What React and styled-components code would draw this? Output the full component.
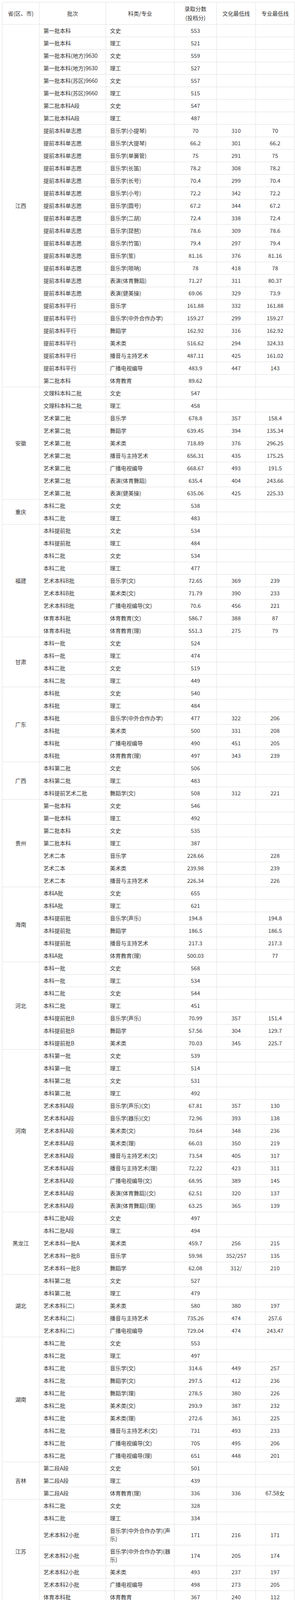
import React from 'react';
import styled, { createGlobalStyle } from 'styled-components';

const GlobalStyle = createGlobalStyle`
  body {
    margin: 0;
    background: #fff;
    font-family: "Noto Sans CJK SC", "Noto Sans", sans-serif;
    color: #333;
  }
`;

// 各省录取数据: [批次, 科类/专业, 录取分数, 文化最低线, 专业最低线]
const groups = [
  {
    province: '江西',
    rows: [
      ['第一批本科', '文史', '553'],
      ['第一批本科', '理工', '521'],
      ['第一批本科(地方)9630', '文史', '559'],
      ['第一批本科(地方)9630', '理工', '527'],
      ['第一批本科(苏区)9660', '文史', '557'],
      ['第一批本科(苏区)9660', '理工', '515'],
      ['第二批本科A段', '文史', '547'],
      ['第二批本科A段', '理工', '487'],
      ['提前本科单志愿', '音乐学(小提琴)', '70', '310', '70'],
      ['提前本科单志愿', '音乐学(大提琴)', '66.2', '301', '66.2'],
      ['提前本科单志愿', '音乐学(单簧管)', '75', '291', '75'],
      ['提前本科单志愿', '音乐学(长笛)', '78.2', '308', '78.2'],
      ['提前本科单志愿', '音乐学(长号)', '70.4', '299', '70.4'],
      ['提前本科单志愿', '音乐学(小号)', '72.2', '342', '72.2'],
      ['提前本科单志愿', '音乐学(圆号)', '67.2', '344', '67.2'],
      ['提前本科单志愿', '音乐学(二胡)', '72.4', '338', '72.4'],
      ['提前本科单志愿', '音乐学(琵琶)', '78.6', '309', '78.6'],
      ['提前本科单志愿', '音乐学(竹笛)', '79.4', '297', '79.4'],
      ['提前本科单志愿', '音乐学(笙)', '81.16', '376', '81.16'],
      ['提前本科单志愿', '音乐学(唢呐)', '78', '418', '78'],
      ['提前本科单志愿', '表演(体育舞蹈)', '71.27', '311', '80.37'],
      ['提前本科单志愿', '表演(健美操)', '69.06', '329', '73.9'],
      ['提前本科平行', '音乐学', '161.88', '332', '161.88'],
      ['提前本科平行', '音乐学(中外合作办学)', '159.27', '299', '159.27'],
      ['提前本科平行', '舞蹈学', '162.92', '316', '162.92'],
      ['提前本科平行', '美术类', '516.62', '294', '324.33'],
      ['提前本科平行', '播音与主持艺术', '487.11', '425', '161.02'],
      ['提前本科平行', '广播电视编导', '483.9', '447', '143'],
      ['第二批本科', '体育教育', '89.62'],
    ],
  },
  {
    province: '安徽',
    rows: [
      ['文理科本科二批', '文史', '547'],
      ['文理科本科二批', '理工', '458'],
      ['艺术第二批', '音乐学', '678.8', '357', '158.4'],
      ['艺术第二批', '舞蹈学', '639.45', '394', '135.34'],
      ['艺术第二批', '美术类', '718.89', '376', '296.25'],
      ['艺术第二批', '播音与主持艺术', '656.31', '435', '175.25'],
      ['艺术第二批', '广播电视编导', '668.67', '493', '191.5'],
      ['艺术第二批', '表演(体育舞蹈)', '635.4', '404', '243.66'],
      ['艺术第二批', '表演(健美操)', '635.06', '425', '225.33'],
    ],
  },
  {
    province: '重庆',
    rows: [
      ['本科二批', '文史', '538'],
      ['本科二批', '理工', '483'],
    ],
  },
  {
    province: '福建',
    rows: [
      ['本科提前批', '文史', '534'],
      ['本科提前批', '理工', '484'],
      ['本科二批', '文史', '534'],
      ['本科二批', '理工', '477'],
      ['艺术本科B批', '音乐学(文)', '72.65', '369', '239'],
      ['艺术本科B批', '美术类(文)', '71.79', '390', '233'],
      ['艺术本科B批', '广播电视编导(文)', '70.6', '456', '221'],
      ['体育本科批', '体育教育(文)', '586.7', '388', '87'],
      ['体育本科批', '体育教育(理)', '551.3', '275', '79'],
    ],
  },
  {
    province: '甘肃',
    rows: [
      ['本科一批', '文史', '524'],
      ['本科一批', '理工', '474'],
      ['本科二批', '文史', '519'],
      ['本科二批', '理工', '449'],
    ],
  },
  {
    province: '广东',
    rows: [
      ['本科批', '文史', '540'],
      ['本科批', '理工', '484'],
      ['本科批', '音乐学(中外合作办学)', '477', '322', '206'],
      ['本科批', '美术类', '500', '331', '208'],
      ['本科批', '广播电视编导', '490', '451', '205'],
      ['本科批', '体育教育(理)', '497', '343', '239'],
    ],
  },
  {
    province: '广西',
    rows: [
      ['本科第二批', '文史', '506'],
      ['本科第二批', '理工', '483'],
      ['本科提前艺术二批', '舞蹈学(文)', '508', '312', '221'],
    ],
  },
  {
    province: '贵州',
    rows: [
      ['第一批本科', '文史', '546'],
      ['第一批本科', '理工', '492'],
      ['第二批本科', '文史', '535'],
      ['第二批本科', '理工', '387'],
      ['艺术二本', '音乐学', '228.66', '', '228'],
      ['艺术二本', '美术类', '239.98', '', '239'],
      ['艺术二本', '播音与主持艺术', '226.34', '', '226'],
    ],
  },
  {
    province: '海南',
    rows: [
      ['本科A批', '文史', '655'],
      ['本科A批', '理工', '621'],
      ['本科提前批', '音乐学(声乐)', '194.8', '', '194.8'],
      ['本科提前批', '舞蹈学', '186.5', '', '186.5'],
      ['本科提前批', '播音与主持艺术', '217.3', '', '217.3'],
      ['本科A批', '体育教育(理)', '500.03', '', '77'],
    ],
  },
  {
    province: '河北',
    rows: [
      ['本科一批', '文史', '568'],
      ['本科一批', '理工', '534'],
      ['本科二批', '文史', '544'],
      ['本科二批', '理工', '451'],
      ['本科提前批B', '音乐学(声乐)', '70.99', '357', '151.4'],
      ['本科提前批B', '舞蹈学', '57.56', '304', '129.7'],
      ['本科提前批B', '美术类', '70.03', '345', '225.7'],
    ],
  },
  {
    province: '河南',
    rows: [
      ['本科第一批', '文史', '539'],
      ['本科第一批', '理工', '514'],
      ['本科第二批', '文史', '531'],
      ['本科第二批', '理工', '492'],
      ['艺术本科A段', '音乐学(声乐)(文)', '67.81', '357', '130'],
      ['艺术本科A段', '音乐学(器乐)(文)', '72.96', '393', '138'],
      ['艺术本科A段', '美术类(文)', '70.64', '348', '236'],
      ['艺术本科A段', '美术类(理)', '66.03', '350', '219'],
      ['艺术本科A段', '播音与主持艺术(文)', '73.54', '405', '317'],
      ['艺术本科A段', '播音与主持艺术(理)', '72.22', '423', '311'],
      ['艺术本科A段', '广播电视编导(文)', '68.95', '389', '145'],
      ['艺术本科A段', '表演(体育舞蹈)(文)', '62.51', '320', '137'],
      ['艺术本科A段', '表演(体育舞蹈)(理)', '63.25', '365', '139'],
    ],
  },
  {
    province: '黑龙江',
    rows: [
      ['本科二批A段', '文史', '497'],
      ['本科二批A段', '理工', '494'],
      ['艺术本科一批A', '美术类', '459.7', '256', '215'],
      ['艺术本科一批B', '音乐学', '59.98', '352/257', '135'],
      ['艺术本科一批B', '舞蹈学', '62.08', '312/', '210'],
    ],
  },
  {
    province: '湖北',
    rows: [
      ['本科第二批', '文史', '527'],
      ['本科第二批', '理工', '479'],
      ['艺术本科(二)', '美术类', '580', '380', '197'],
      ['艺术本科(二)', '播音与主持艺术', '735.26', '474', '257.6'],
      ['艺术本科(二)', '广播电视编导', '729.04', '474', '243.47'],
    ],
  },
  {
    province: '湖南',
    rows: [
      ['本科二批', '文史', '553'],
      ['本科二批', '理工', '497'],
      ['本科二批', '音乐学(文)', '314.6', '449', '257'],
      ['本科二批', '舞蹈学(文)', '297.5', '412', '236'],
      ['本科二批', '舞蹈学(理)', '278.5', '380', '226'],
      ['本科二批', '美术类(文)', '293.9', '387', '232'],
      ['本科二批', '美术类(理)', '272.6', '361', '225'],
      ['本科二批', '播音与主持艺术(文)', '731', '493', '233'],
      ['本科二批', '广播电视编导(文)', '705', '495', '206'],
      ['本科二批', '广播电视编导(理)', '651', '448', '201'],
    ],
  },
  {
    province: '吉林',
    rows: [
      ['第二段A段', '文史', '501'],
      ['第二段A段', '理工', '439'],
      ['第二段A段', '体育教育(理)', '336', '336', '67.58女'],
    ],
  },
  {
    province: '江苏',
    rows: [
      ['本科二批', '文史', '328'],
      ['本科二批', '理工', '334'],
      ['艺术本科2小批', '音乐学(中外合作办学)(声乐)', '171', '216', '171'],
      ['艺术本科2小批', '音乐学(中外合作办学)(器乐)', '174', '205', '174'],
      ['艺术本科2小批', '美术类', '493', '237', '197'],
      ['艺术本科2小批', '广播电视编导', '498', '273', '205'],
      ['体育本科批', '体育教育', '367', '240', '112'],
    ],
  },
  {
    province: '辽宁',
    rows: [
      ['本科批', '文史', '545'],
      ['本科批', '理工', '513'],
      ['体育本科二批', '体育教育(文)', '131.4', '412', '71.9'],
      ['体育本科二批', '体育教育(理)', '118.2', '321', '71'],
    ],
  },
  {
    province: '内蒙古',
    rows: [
      ['本科二批', '文史', '488'],
      ['本科二批', '理工', '419'],
    ],
  },
  {
    province: '山东',
    rows: [
      ['本科普通批', '文史', '541'],
      ['本科普通批', '理工', '501'],
      ['艺术本科A段联考', '音乐学(文)', '73.11', '331', '73.11'],
      ['艺术本科A段联考', '音乐学(理)', '72.88', '301', '72.88'],
      ['艺术本科A段联考', '舞蹈学(文)', '423', '423', ''],
      ['艺术本科A段', '美术类(文)', '547.46', '355', '226.33'],
      ['艺术本科A段', '美术类(理)', '542.35', '288', '246.67'],
      ['艺术本科A段', '广播电视编导(文)', '513.5', '485', '201.5'],
      ['艺术本科A段', '广播电视编导(理)', '489.75', '465', '219'],
      ['本科普通批', '体育教育', '554.45', '403', '81.05'],
    ],
  },
  {
    province: '山西',
    rows: [
      ['第二批本科A', '文史', '521'],
      ['第二批本科A', '理工', '469'],
      ['第二批本科A', '音乐学', '71.48', '373', '80.46'],
      ['第二批本科A', '舞蹈学', '63.25', '398', '65.23'],
      ['第二批本科A', '美术类', '66.3', '340', '222.66'],
      ['第二批本科A', '播音与主持艺术', '72.53', '364', '82.47'],
      ['第二批本科A', '广播电视编导', '73.58', '351', '332'],
    ],
  },
  {
    province: '陕西',
    rows: [
      ['本科二批', '文史', '514'],
      ['本科二批', '理工', '463'],
    ],
  },
  {
    province: '上海',
    rows: [
      ['本科体育乙批', '体育教育', '76.86', '335', '76.86'],
      ['本科普通类', '综合改革', '436'],
    ],
  },
  {
    province: '四川',
    rows: [
      ['本科一批', '文史', '545'],
      ['本科一批', '理工', '555'],
      ['本科二批', '文史', '519'],
      ['本科二批', '理工', '514'],
      ['本科一批', '音乐学', '254.58', '345', '254.58'],
      ['本科一批', '舞蹈学', '325.6', '355', '325.6'],
      ['本科一批', '美术类', '242.66', '372', '242.66'],
    ],
  },
  {
    province: '天津',
    rows: [
      ['本科批A段', '文史', '488'],
      ['本科批A段', '理工', '482'],
      ['艺术本科统考批', '美术学(文)', '505.7', '365', '237.8'],
    ],
  },
  {
    province: '新疆',
    rows: [
      ['南疆单列', '文史', '462'],
      ['本科第二批', '文史', '492'],
      ['本科第二批', '理工', '432'],
      ['本科第零批艺术', '音乐学', '68.14', '264', '214.33'],
    ],
  },
  {
    province: '云南',
    rows: [
      ['二本', '文史', '555'],
      ['二本', '理工', '530'],
    ],
  },
  {
    province: '浙江',
    rows: [
      ['本科普通类', '综合改革', '561'],
      ['艺术本科二批', '音乐学(中外合作办学)', '472', '386', '66'],
      ['艺术本科二批', '美术类', '550', '440', '78'],
      ['艺术本科二批', '播音与主持艺术', '555', '540', '73'],
      ['艺术本科二批', '广播电视编导', '566', '566', '57'],
      ['体育类', '体育教育', '558', '497', '76'],
    ],
  },
];

const widths = [95, 170, 175, 108, 100, 99];

const Page = styled.div`
  padding: 5px 0 0 5px;
`;

const ScoreTable = styled.table`
  width: 747px;
  table-layout: fixed;
  border-collapse: collapse;
  font-size: 14px;
  color: #333;
`;

const HeadCell = styled.th`
  border: 1px solid #e0e0e0;
  padding: 5px 4px;
  line-height: 23px;
  font-weight: normal;
  text-align: center;
  vertical-align: middle;
`;

const Cell = styled.td`
  border: 1px solid #e0e0e0;
  padding: ${(p) => (p.$left ? '5px 6px 5px 10px' : '5px 10px')};
  line-height: 21px;
  text-align: ${(p) => (p.$left ? 'left' : 'center')};
  vertical-align: middle;
`;

const Note = styled.p`
  margin: 12px 0 0 9px;
  font-size: 14px;
  line-height: 21px;
  color: #333;
`;

export default function App() {
  return (
    <Page>
      <GlobalStyle />
      <ScoreTable>
        <colgroup>
          {widths.map((w, i) => (
            <col key={i} style={{ width: w }} />
          ))}
        </colgroup>
        <thead>
          <tr>
            <HeadCell>省(区、市)</HeadCell>
            <HeadCell>批次</HeadCell>
            <HeadCell>科类/专业</HeadCell>
            <HeadCell>
              录取分数
              <br />
              (投档分)
            </HeadCell>
            <HeadCell>文化最低线</HeadCell>
            <HeadCell>专业最低线</HeadCell>
          </tr>
        </thead>
        <tbody>
          {groups.map((g) =>
            g.rows.map((r, i) => (
              <tr key={g.province + i}>
                {i === 0 && <Cell rowSpan={g.rows.length}>{g.province}</Cell>}
                <Cell $left>{r[0]}</Cell>
                <Cell $left>{r[1]}</Cell>
                <Cell>{r[2]}</Cell>
                <Cell>{r[3] || ''}</Cell>
                <Cell>{r[4] || ''}</Cell>
              </tr>
            ))
          )}
        </tbody>
      </ScoreTable>
      <Note>以上数据，仅供参考!</Note>
    </Page>
  );
}
